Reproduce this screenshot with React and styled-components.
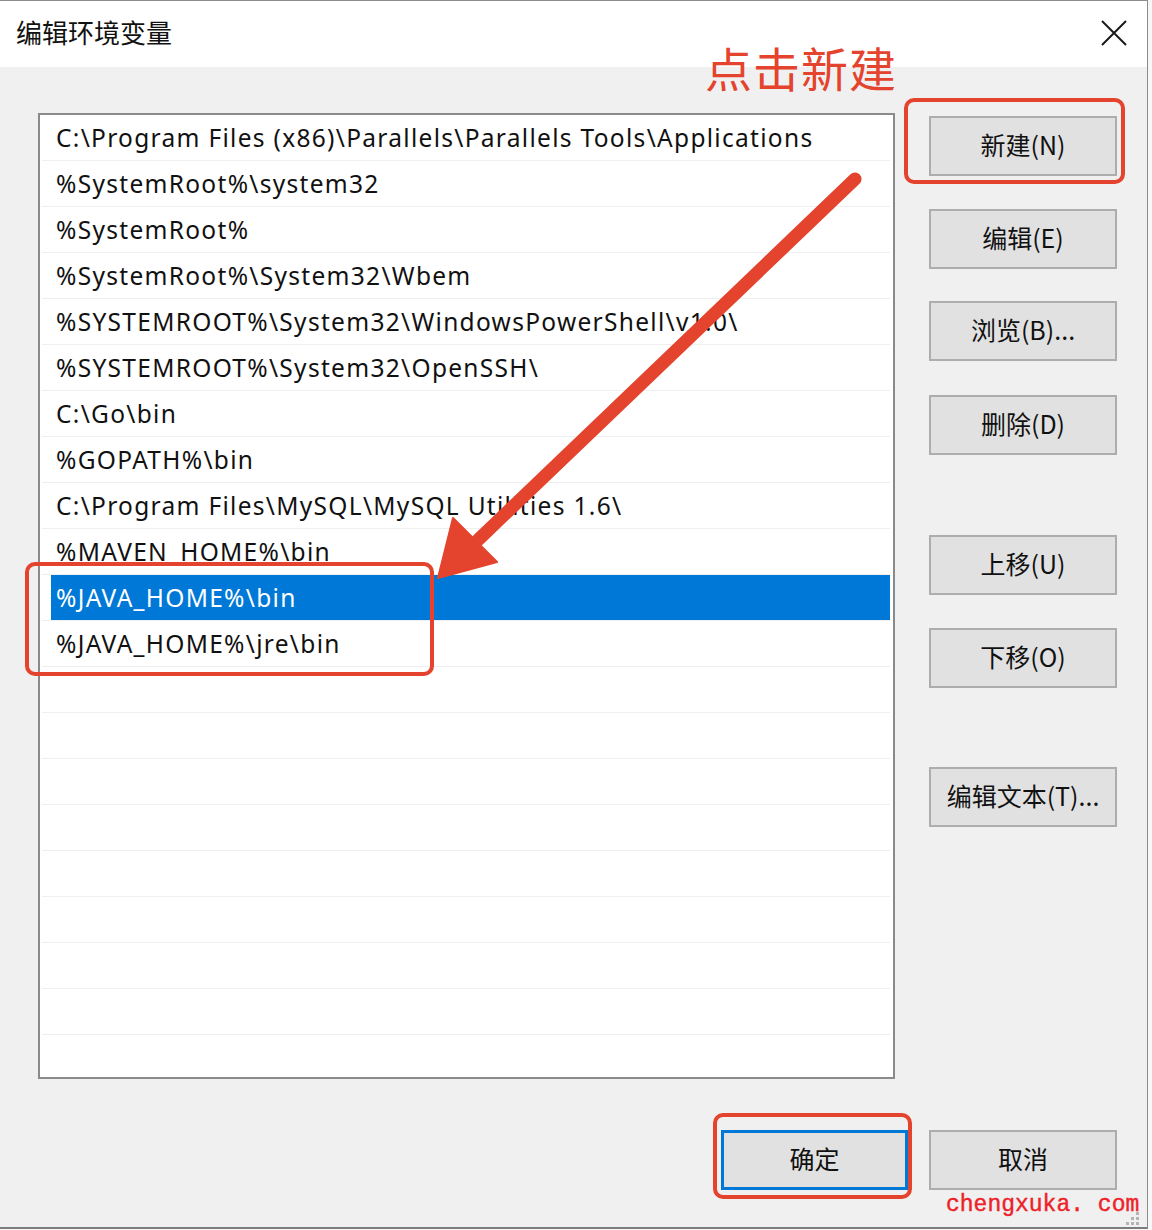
import React from 'react';
import styled, { createGlobalStyle } from 'styled-components';

const GlobalStyle = createGlobalStyle`
    html, body {
        margin: 0;
        padding: 0;
        background: #f7f7f7;
    }
    * {
        box-sizing: border-box;
    }
`;

const RED = '#e4432d';

const Page = styled.div`
    position: relative;
    width: 1152px;
    height: 1230px;
    overflow: hidden;
`;

const Window = styled.div`
    width: 1148px;
    height: 1229px;
    display: flex;
    flex-direction: column;
    border-top: 1px solid #8c8c8c;
    border-right: 1px solid #8c8c8c;
    border-bottom: 2px solid #7c7c7c;
    background: #f0f0f0;
    font-family: 'Noto Sans', 'Noto Sans CJK SC', sans-serif;
`;

const TitleBar = styled.div`
    height: 66px;
    flex: 0 0 auto;
    display: flex;
    align-items: center;
    justify-content: space-between;
    background: #ffffff;
    padding: 0 18px 0 16px;
`;

const Title = styled.div`
    font-family: 'Noto Sans CJK SC', sans-serif;
    font-size: 26px;
    color: #111;
    margin-top: -5px;
`;

const CloseButton = styled.div`
    width: 30px;
    height: 30px;
    display: flex;
    align-items: center;
    justify-content: center;
    margin-top: -2px;
`;

const Body = styled.div`
    flex: 1;
    display: grid;
    grid-template-columns: 857px 188px;
    grid-template-rows: 966px auto;
    column-gap: 34px;
    padding: 46px 0 0 38px;
`;

const ListBox = styled.div`
    border: 2px solid #8a8a8a;
    background: #ffffff;
    overflow: hidden;
    padding: 0 3px 0 2px;
`;

const Row = styled.div`
    height: 46px;
    display: flex;
    align-items: center;
    padding: 0 0 1px 14px;
    border-bottom: 1px solid #efefef;
    font-size: 24.5px;
    letter-spacing: 1.3px;
    white-space: nowrap;
    color: ${(props) => (props.$selected ? '#ffffff' : '#111')};
    background: ${(props) =>
        props.$selected
            ? 'linear-gradient(to right, transparent 9px, #0078d7 9px)'
            : 'transparent'};
`;

const ButtonColumn = styled.div`
    display: flex;
    flex-direction: column;
    padding-top: 3px;
`;

const Button = styled.div`
    width: ${(props) => props.$width || '188px'};
    height: 60px;
    margin-top: ${(props) => props.$mt || 0}px;
    display: flex;
    align-items: center;
    justify-content: center;
    padding-bottom: 4px;
    background: #e1e1e1;
    border: ${(props) => (props.$default ? '3px solid #0078d7' : '2px solid #adadad')};
    font-family: 'Noto Sans CJK SC', sans-serif;
    font-size: 25px;
    color: #111;
`;

const Footer = styled.div`
    grid-column: 1 / 3;
    display: flex;
    justify-content: flex-end;
    gap: 21px;
    padding-top: 51px;
`;

const Callout = styled.div`
    position: absolute;
    left: 705px;
    top: 32px;
    font-family: 'Noto Sans CJK SC', sans-serif;
    font-size: 47px;
    letter-spacing: 1px;
    color: ${RED};
`;

const Highlight = styled.div`
    position: absolute;
    border: 4px solid ${RED};
    border-radius: 10px;
    pointer-events: none;
`;

const Overlay = styled.svg`
    position: absolute;
    left: 0;
    top: 0;
    pointer-events: none;
`;

const Watermark = styled.div`
    position: absolute;
    left: 946px;
    top: 1192px;
    font-family: 'Liberation Mono', monospace;
    font-size: 23px;
    color: #ee2128;
    -webkit-text-stroke: 0.4px #ee2128;
`;

const Grip = styled.svg`
    position: absolute;
    left: 1124px;
    top: 1210px;
`;

const paths = [
    'C:\\Program Files (x86)\\Parallels\\Parallels Tools\\Applications',
    '%SystemRoot%\\system32',
    '%SystemRoot%',
    '%SystemRoot%\\System32\\Wbem',
    '%SYSTEMROOT%\\System32\\WindowsPowerShell\\v1.0\\',
    '%SYSTEMROOT%\\System32\\OpenSSH\\',
    'C:\\Go\\bin',
    '%GOPATH%\\bin',
    'C:\\Program Files\\MySQL\\MySQL Utilities 1.6\\',
    '%MAVEN_HOME%\\bin',
    '%JAVA_HOME%\\bin',
    '%JAVA_HOME%\\jre\\bin'
];

const sideButtons = [
    { label: '新建(N)', mt: 0 },
    { label: '编辑(E)', mt: 33 },
    { label: '浏览(B)...', mt: 32 },
    { label: '删除(D)', mt: 34 },
    { label: '上移(U)', mt: 80 },
    { label: '下移(O)', mt: 33 },
    { label: '编辑文本(T)...', mt: 79 }
];

export default function App() {
    const rows = [...paths, ...Array(21 - paths.length).fill('')];
    return (
        <Page>
            <GlobalStyle />
            <Window>
                <TitleBar>
                    <Title>编辑环境变量</Title>
                    <CloseButton>
                        <svg width="28" height="28" viewBox="0 0 28 28">
                            <path d="M2 2 L26 26 M26 2 L2 26" stroke="#1a1a1a" strokeWidth="2" />
                        </svg>
                    </CloseButton>
                </TitleBar>
                <Body>
                    <ListBox>
                        {rows.map((p, i) => (
                            <Row key={i} $selected={i === 10}>
                                {p}
                            </Row>
                        ))}
                    </ListBox>
                    <ButtonColumn>
                        {sideButtons.map((b) => (
                            <Button key={b.label} $mt={b.mt}>
                                {b.label}
                            </Button>
                        ))}
                    </ButtonColumn>
                    <Footer>
                        <Button $default $width="187px">确定</Button>
                        <Button>取消</Button>
                    </Footer>
                </Body>
            </Window>

            <Callout>点击新建</Callout>
            <Highlight style={{ left: 904, top: 98, width: 221, height: 86 }} />
            <Highlight style={{ left: 25, top: 562, width: 409, height: 114 }} />
            <Highlight style={{ left: 713, top: 1113, width: 199, height: 86 }} />
            <Overlay width="1152" height="1230" viewBox="0 0 1152 1230">
                <line x1="855" y1="179" x2="478" y2="540" stroke={RED} strokeWidth="13" strokeLinecap="round" />
                <polygon points="438,578 453,518 497,562" fill={RED} stroke={RED} strokeWidth="2" strokeLinejoin="round" />
            </Overlay>
            <Watermark>chengxuka. com</Watermark>
            <Grip width="18" height="16" viewBox="0 0 18 16">
                <g fill="#b4b4b4">
                    <rect x="12" y="2" width="3" height="3" />
                    <rect x="7" y="7" width="3" height="3" />
                    <rect x="12" y="7" width="3" height="3" />
                    <rect x="2" y="12" width="3" height="3" />
                    <rect x="7" y="12" width="3" height="3" />
                    <rect x="12" y="12" width="3" height="3" />
                </g>
            </Grip>
        </Page>
    );
}
